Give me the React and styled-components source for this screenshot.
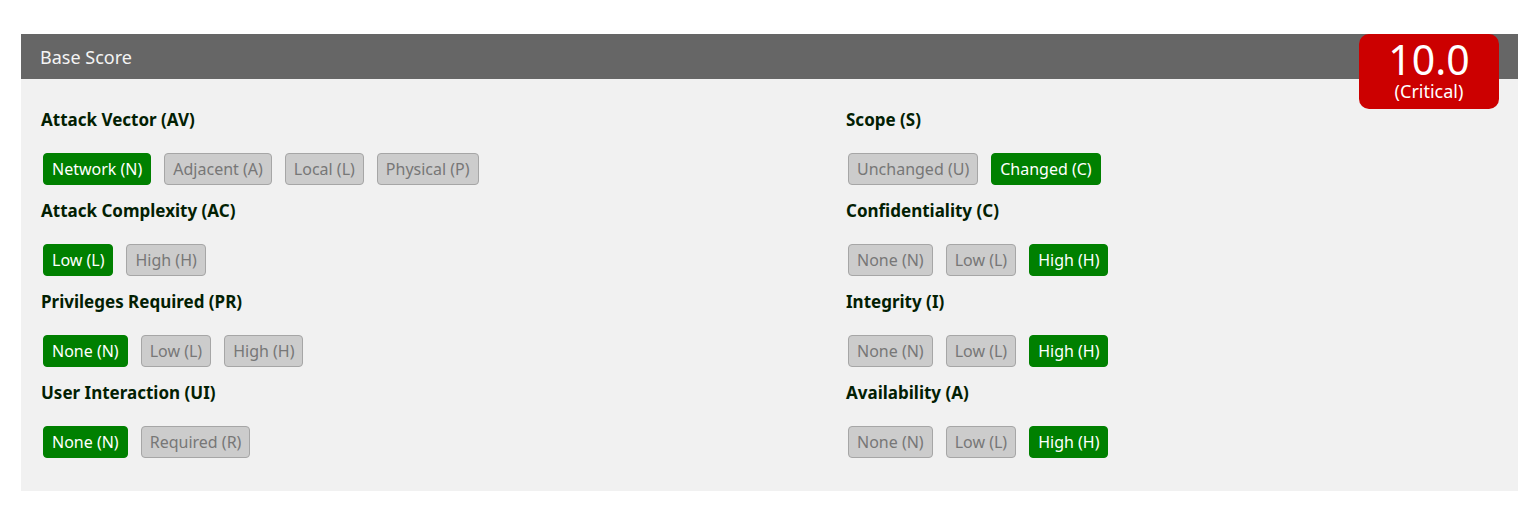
import React from 'react';
import styled, { createGlobalStyle } from 'styled-components';

const GlobalStyle = createGlobalStyle`
  body {
    margin: 0;
    background: #ffffff;
    font-family: "Noto Sans", "Open Sans", sans-serif;
  }
`;

const Page = styled.div`
  padding: 34px 9px 0 21px;
`;

const Panel = styled.section`
  position: relative;
  background: #f1f1f1;

  /* thin rule under the panel */
  &::after {
    content: '';
    position: absolute;
    left: -3px;
    right: -2px;
    bottom: -3px;
    height: 3px;
    background: #e2e2e2;
  }
`;

const Header = styled.div`
  height: 45px;
  background: #666666;
  color: #f4f4f4;
  font-size: 18px;
  display: flex;
  align-items: center;
  padding-left: 19px;
`;

const ScoreBadge = styled.div`
  position: absolute;
  top: 0;
  right: 19px;
  width: 140px;
  height: 75px;
  box-sizing: border-box;
  padding-top: 5px;
  background: #cc0000;
  border-radius: 10px;
  color: #ffffff;
  display: flex;
  flex-direction: column;
  align-items: center;
`;

const ScoreValue = styled.div`
  font-size: 41px;
  line-height: 41px;
`;

const ScoreLabel = styled.div`
  font-size: 18px;
  line-height: 22px;
`;

const Body = styled.div`
  display: grid;
  grid-template-columns: 805px 1fr;
  padding: 28px 20px 20px 20px;
`;

const Column = styled.div`
  display: flex;
  flex-direction: column;
`;

const Metric = styled.div`
  margin-bottom: 13px;
`;

const MetricTitle = styled.h3`
  margin: 1px 0 21px 0;
  font-size: 17px;
  line-height: 24px;
  font-weight: 700;
  color: #022002;
`;

const Options = styled.div`
  display: flex;
  gap: 13px;
  padding-left: 2px;
`;

const Option = styled.button`
  height: 32px;
  padding: 0 8px;
  font-family: inherit;
  font-size: 16px;
  border-radius: 4px;
  border: 1px solid ${(p) => (p.$active ? '#008000' : '#a6a6a6')};
  background: ${(p) => (p.$active ? '#008000' : '#cccccc')};
  color: ${(p) => (p.$active ? '#ffffff' : '#777777')};
  cursor: pointer;
`;

const left = [
  { title: 'Attack Vector (AV)', options: ['Network (N)', 'Adjacent (A)', 'Local (L)', 'Physical (P)'], active: 0 },
  { title: 'Attack Complexity (AC)', options: ['Low (L)', 'High (H)'], active: 0 },
  { title: 'Privileges Required (PR)', options: ['None (N)', 'Low (L)', 'High (H)'], active: 0 },
  { title: 'User Interaction (UI)', options: ['None (N)', 'Required (R)'], active: 0 },
];

const right = [
  { title: 'Scope (S)', options: ['Unchanged (U)', 'Changed (C)'], active: 1 },
  { title: 'Confidentiality (C)', options: ['None (N)', 'Low (L)', 'High (H)'], active: 2 },
  { title: 'Integrity (I)', options: ['None (N)', 'Low (L)', 'High (H)'], active: 2 },
  { title: 'Availability (A)', options: ['None (N)', 'Low (L)', 'High (H)'], active: 2 },
];

const MetricGroup = ({ items }) => (
  <Column>
    {items.map((m) => (
      <Metric key={m.title}>
        <MetricTitle>{m.title}</MetricTitle>
        <Options>
          {m.options.map((o, i) => (
            <Option key={o} $active={i === m.active}>{o}</Option>
          ))}
        </Options>
      </Metric>
    ))}
  </Column>
);

const App = () => (
  <Page>
    <GlobalStyle />
    <Panel>
      <Header>Base Score</Header>
      <ScoreBadge>
        <ScoreValue>10.0</ScoreValue>
        <ScoreLabel>(Critical)</ScoreLabel>
      </ScoreBadge>
      <Body>
        <MetricGroup items={left} />
        <MetricGroup items={right} />
      </Body>
    </Panel>
  </Page>
);

export default App;
